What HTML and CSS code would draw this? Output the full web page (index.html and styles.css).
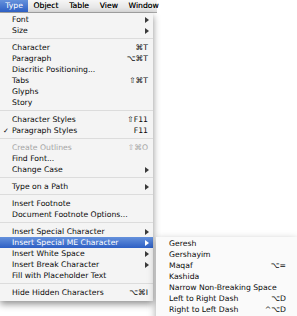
FILE: index.html
```html
<!DOCTYPE html>
<html>
<head>
<meta charset="utf-8">
<link rel="stylesheet" href="styles.css">
</head>
<body>
<div class="menubar">
  <span class="mb active">Type</span>
  <span class="mb">Object</span>
  <span class="mb">Table</span>
  <span class="mb">View</span>
  <span class="mb">Window</span>
</div>
<div class="menu">
  <div class="row"><span class="chk"></span><span class="lbl">Font</span><span class="arr"></span></div>
  <div class="row"><span class="chk"></span><span class="lbl">Size</span><span class="arr"></span></div>
  <div class="sep"></div>
  <div class="row"><span class="chk"></span><span class="lbl">Character</span><span class="key">⌘T</span></div>
  <div class="row"><span class="chk"></span><span class="lbl">Paragraph</span><span class="key">⌥⌘T</span></div>
  <div class="row"><span class="chk"></span><span class="lbl">Diacritic Positioning...</span></div>
  <div class="row"><span class="chk"></span><span class="lbl">Tabs</span><span class="key">⇧⌘T</span></div>
  <div class="row"><span class="chk"></span><span class="lbl">Glyphs</span></div>
  <div class="row"><span class="chk"></span><span class="lbl">Story</span></div>
  <div class="sep"></div>
  <div class="row"><span class="chk"></span><span class="lbl">Character Styles</span><span class="key">⇧F11</span></div>
  <div class="row"><span class="chk">✓</span><span class="lbl">Paragraph Styles</span><span class="key">F11</span></div>
  <div class="sep"></div>
  <div class="row disabled"><span class="chk"></span><span class="lbl">Create Outlines</span><span class="key">⇧⌘O</span></div>
  <div class="row"><span class="chk"></span><span class="lbl">Find Font...</span></div>
  <div class="row"><span class="chk"></span><span class="lbl">Change Case</span><span class="arr"></span></div>
  <div class="sep"></div>
  <div class="row"><span class="chk"></span><span class="lbl">Type on a Path</span><span class="arr"></span></div>
  <div class="sep"></div>
  <div class="row"><span class="chk"></span><span class="lbl">Insert Footnote</span></div>
  <div class="row"><span class="chk"></span><span class="lbl">Document Footnote Options...</span></div>
  <div class="sep"></div>
  <div class="row"><span class="chk"></span><span class="lbl">Insert Special Character</span><span class="arr"></span></div>
  <div class="row hl"><span class="chk"></span><span class="lbl">Insert Special ME Character</span><span class="arr"></span></div>
  <div class="row"><span class="chk"></span><span class="lbl">Insert White Space</span><span class="arr"></span></div>
  <div class="row"><span class="chk"></span><span class="lbl">Insert Break Character</span><span class="arr"></span></div>
  <div class="row"><span class="chk"></span><span class="lbl">Fill with Placeholder Text</span></div>
  <div class="sep"></div>
  <div class="row"><span class="chk"></span><span class="lbl">Hide Hidden Characters</span><span class="key">⌥⌘I</span></div>
</div>
<div class="submenu">
  <div class="srow"><span class="lbl">Geresh</span></div>
  <div class="srow"><span class="lbl">Gershayim</span></div>
  <div class="srow"><span class="lbl">Maqaf</span><span class="key">⌥=</span></div>
  <div class="srow"><span class="lbl">Kashida</span></div>
  <div class="srow"><span class="lbl">Narrow Non-Breaking Space</span></div>
  <div class="srow"><span class="lbl">Left to Right Dash</span><span class="key">⌥D</span></div>
  <div class="srow"><span class="lbl">Right to Left Dash</span><span class="key">^⌥D</span></div>
</div>
</body>
</html>
```

FILE: styles.css
```css
html, body {
  margin: 0;
  padding: 0;
}
body {
  width: 297px;
  height: 316px;
  overflow: hidden;
  background: #ffffff;
  font-family: "DejaVu Sans", sans-serif;
  font-size: 7.7px;
  color: #0a0a0a;
  position: relative;
}
.menubar {
  display: flex;
  align-items: stretch;
  width: 157px;
  height: 13px;
  box-sizing: border-box;
  background: linear-gradient(#f6f6f6, #dedede);
  border-bottom: 1px solid #a9a9a9;
}
.mb {
  padding: 0 5.3px;
  line-height: 12px;
  color: #000000;
  text-shadow: 0 0 0.4px rgba(0, 0, 0, 0.6);
}
.mb.active {
  background: linear-gradient(#6591dc, #2d5fc4);
  color: #ffffff;
  text-shadow: none;
}
.menu {
  width: 153px;
  background: #f4f4f4;
  box-shadow: 0 3px 7px rgba(0, 0, 0, 0.45);
  padding: 1px 0 3px;
}
.row {
  display: flex;
  align-items: center;
  height: 11px;
  padding-right: 4px;
}
.chk {
  width: 12px;
  flex: none;
  text-align: center;
  font-size: 7px;
}
.lbl {
  flex: 1;
  white-space: nowrap;
}
.key {
  white-space: nowrap;
  padding-right: 1px;
}
.arr {
  width: 0;
  height: 0;
  border-left: 4px solid #3a3a3a;
  border-top: 3px solid transparent;
  border-bottom: 3px solid transparent;
}
.row.disabled {
  color: #a4a4a4;
}
.row.hl {
  background: linear-gradient(#6591dc, #2d5fc4);
  color: #ffffff;
}
.row.hl .arr {
  border-left-color: #ffffff;
}
.sep {
  height: 1px;
  background: #dcdcdc;
  margin: 2px 0 3px;
}
.submenu {
  position: absolute;
  left: 156px;
  top: 237px;
  width: 141px;
  box-sizing: border-box;
  background: #fafafa;
  box-shadow: 0 3px 8px rgba(0, 0, 0, 0.35);
  padding: 1px 10px 6px 13px;
}
.srow {
  display: flex;
  align-items: center;
  height: 11px;
}
```
